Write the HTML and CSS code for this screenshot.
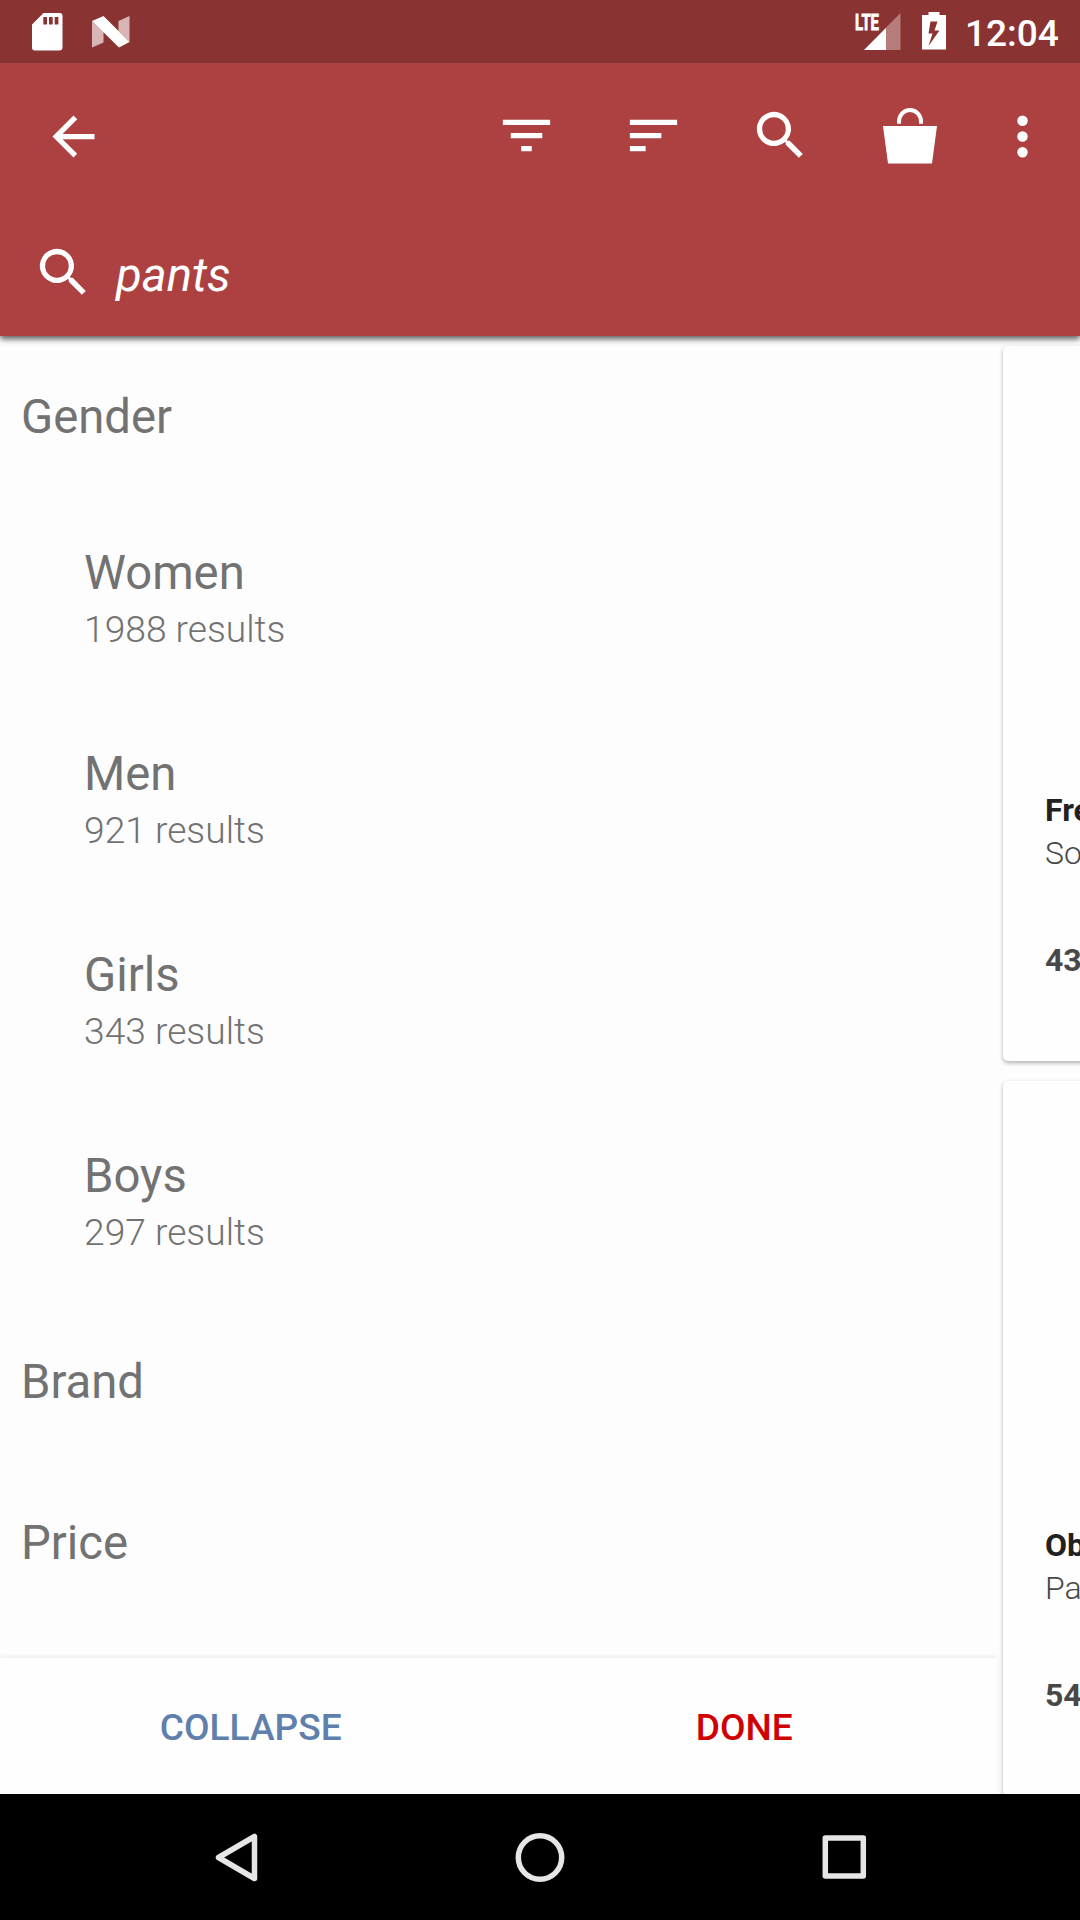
FILE: index.html
```html
<!DOCTYPE html>
<html lang="en">
<head>
<meta charset="utf-8">
<title>Search filters</title>
<link rel="stylesheet" href="styles.css">
</head>
<body>
<div class="screen">
  <header class="status-bar">
    <svg class="sd-icon" width="31" height="38" viewBox="0 0 31 38"><path fill="#fff" fill-rule="evenodd" d="M11.500 0H27.500a3 3 0 0 1 3 3V34.500a3 3 0 0 1-3 3H3a3 3 0 0 1-3-3V11.500ZM11.300 4v7.500h3.700V4ZM17 4v7.500h3.700V4ZM22.700 4v7.500h3.700V4Z"/></svg>
    <svg class="n-icon" width="38" height="32" viewBox="0 0 38 32"><path fill="#d9b5b5" d="M0 5 11.500 16V26.500L0 31.500ZM37.500 0V26L26.500 15V5Z"/><path fill="#fff" d="M0 5 11.500 0 37.500 26 27 31.500Z"/></svg>
    <svg class="signal-icon" width="46" height="38" viewBox="0 0 46 38"><text class="lte" x="0" y="16.500" textLength="24" lengthAdjust="spacingAndGlyphs">LTE</text><path fill="#b77c7c" d="M31 14.500 45.500 0V37H31Z"/><path fill="#fff" d="M9 37 31 14.800V37Z"/></svg>
    <svg class="battery-icon" width="24" height="38" viewBox="0 0 24 38"><path fill="#fff" fill-rule="evenodd" d="M6.500 0H17.500V3H24V37.500H0V3H6.500ZM8.500 9.500 6.500 21.500H10.500L6.500 34 17.500 18.500H12.500L15.500 9.500Z"/></svg>
    <time class="clock">12:04</time>
  </header>

  <div class="app-bar">
    <nav class="toolbar">
      <svg class="icon back" viewBox="0 0 24 24"><path d="M20 11H7.830l5.590-5.590L12 4l-8 8 8 8 1.410-1.410L7.830 13H20v-2z"/></svg>
      <svg class="icon" viewBox="0 0 24 24"><path d="M10 18h4v-2h-4v2zM3 6v2h18V6H3zm3 7h12v-2H6v2z"/></svg>
      <svg class="icon" viewBox="0 0 24 24"><path d="M3 18h6v-2H3v2zM3 6v2h18V6H3zm0 7h12v-2H3v2z"/></svg>
      <svg class="icon" viewBox="0 0 24 24"><path d="M15.500 14h-.790l-.280-.270A6.500 6.500 0 1 0 13.730 14.430l.270.280v.790l5 4.990L20.490 19l-4.990-5zm-6 0a4.500 4.500 0 1 1 0-9 4.500 4.500 0 0 1 0 9z"/></svg>
      <svg class="bag" width="54" height="56" viewBox="0 0 54 56"><path fill="#fff" d="M0 18H54L49 55.500H5Z"/><path fill="none" stroke="#fff" stroke-width="4" d="M16 15.800V13.500a11 11.500 0 0 1 22 0V15.800"/></svg>
      <svg class="icon more" viewBox="0 0 24 24"><path d="M12 8a2 2 0 1 0 0-4 2 2 0 0 0 0 4zm0 2a2 2 0 1 0 0 4 2 2 0 0 0 0-4zm0 6a2 2 0 1 0 0 4 2 2 0 0 0 0-4z"/></svg>
    </nav>
    <div class="query">
      <svg class="icon" viewBox="0 0 24 24"><path d="M15.500 14h-.790l-.280-.270A6.500 6.500 0 1 0 13.730 14.430l.270.280v.790l5 4.990L20.490 19l-4.990-5zm-6 0a4.500 4.500 0 1 1 0-9 4.500 4.500 0 0 1 0 9z"/></svg>
      <span class="query-text">pants</span>
    </div>
  </div>

  <main class="content">
    <aside class="filters">
      <div class="filter-list">
        <h2 class="group">Gender</h2>
        <div class="option"><span class="name">Women</span><span class="count">1988 results</span></div>
        <div class="option"><span class="name">Men</span><span class="count">921 results</span></div>
        <div class="option"><span class="name">Girls</span><span class="count">343 results</span></div>
        <div class="option"><span class="name">Boys</span><span class="count">297 results</span></div>
        <h2 class="group">Brand</h2>
        <h2 class="group">Price</h2>
      </div>
      <div class="actions">
        <button class="action collapse">COLLAPSE</button>
        <button class="action done">DONE</button>
      </div>
    </aside>
    <section class="products">
      <article class="card">
        <h3 class="brand">Fre</h3>
        <p class="title">So</p>
        <p class="price">43</p>
      </article>
      <article class="card">
        <h3 class="brand">Ob</h3>
        <p class="title">Pa</p>
        <p class="price">54</p>
      </article>
    </section>
  </main>

  <footer class="nav-bar">
    <svg width="63" height="63" viewBox="0 0 63 63"><path class="nav-shape" d="M13.500 31.500 49.500 10.500V52.500Z"/></svg>
    <svg width="63" height="63" viewBox="0 0 63 63"><circle class="nav-shape" cx="31" cy="31.500" r="21.700"/></svg>
    <svg width="63" height="63" viewBox="0 0 63 63"><rect class="nav-shape" x="12.300" y="12" width="38" height="38"/></svg>
  </footer>
</div>
</body>
</html>
```
FILE: styles.css
```css
* { box-sizing: border-box; }

body {
  margin: 0;
  background: #fdfdfd;
  font-family: Roboto, "Liberation Sans", sans-serif;
}

h2, h3, p { margin: 0; font-weight: 400; }
svg { display: block; flex: none; }

.screen {
  display: flex;
  flex-direction: column;
  width: 1080px;
  height: 1920px;
  overflow: hidden;
}

.status-bar {
  position: relative;
  z-index: 2;
  display: flex;
  align-items: flex-start;
  flex: none;
  height: 63px;
  padding: 12px 0 0 32px;
  background: #8a3333;
}
.sd-icon { margin-top: 1px; }
.n-icon { margin: 4px 0 0 29px; }
.signal-icon { margin: 1px 21px 0 auto; overflow: visible; }
.lte {
  fill: #fff;
  stroke: #fff;
  stroke-width: .800px;
  font-size: 22px;
  font-weight: 700;
}
.clock {
  width: 115px;
  margin-left: 19px;
  color: #fff;
  font-size: 37px;
  font-weight: 500;
  line-height: 43px;
}

.app-bar {
  position: relative;
  z-index: 1;
  flex: none;
  height: 273px;
  background: #ad4141;
  box-shadow: 0 3px 6px rgba(0, 0, 0, .65);
}
.icon { width: 63px; height: 63px; fill: #fff; }
.toolbar {
  display: flex;
  align-items: center;
  gap: 64px;
  height: 147px;
  padding: 0 26px 2px 42px;
}
.back { margin: 2px auto 0 0; }
.bag { margin: 0 -10px 0 7px; }
.more { margin-top: 2px; }
.query {
  display: flex;
  align-items: center;
  gap: 21px;
  height: 126px;
  padding: 0 32px;
}
.query .icon { margin-top: -2px; }
.query-text {
  color: #fff;
  font-size: 47.250px;
  font-style: italic;
  line-height: 56px;
  padding-top: 4px;
}

.content { display: flex; flex: 1; min-height: 0; }
.filters {
  display: flex;
  flex-direction: column;
  flex: none;
  width: 997px;
}
.filter-list { flex: 1; color: #727272; overflow: hidden; }
.group {
  display: flex;
  align-items: center;
  height: 161px;
  padding-left: 21px;
  font-size: 47.250px;
}
.option {
  display: flex;
  flex-direction: column;
  justify-content: center;
  gap: 7px;
  height: 201px;
  padding: 2px 0 0 84px;
}
.name { font-size: 47.250px; line-height: 55px; }
.count { font-size: 37.200px; font-weight: 300; line-height: 43px; }
.actions {
  display: flex;
  flex: none;
  height: 136px;
  padding: 0 6px 0 4px;
  background: #fefefe;
  box-shadow: 0 -2px 4px rgba(0, 0, 0, .06);
}
.action {
  flex: 1;
  padding: 3px 0 0;
  border: 0;
  background: none;
  font: 500 37.100px Roboto, "Liberation Sans", sans-serif;
}
.collapse { color: #5f7fad; }
.done { color: #d00000; }

.products {
  display: flex;
  flex-direction: column;
  gap: 20px;
  flex: 1;
  min-width: 0;
  padding: 10px 0 0 6px;
  overflow: hidden;
}
.card {
  flex: none;
  width: 500px;
  height: 715px;
  padding: 446px 42px 0;
  border-radius: 5px;
  background: #fefefe;
  box-shadow: 0 2px 4px rgba(0, 0, 0, .3);
  font-size: 32px;
  line-height: 37px;
}
.brand { color: #212121; font-size: inherit; font-weight: 700; }
.title { margin-top: 6px; color: #484848; font-weight: 300; }
.price { margin-top: 70px; color: #484848; font-weight: 700; }

.nav-bar {
  display: flex;
  align-items: center;
  justify-content: center;
  gap: 241px;
  flex: none;
  height: 126px;
  background: #000;
}
.nav-shape {
  fill: none;
  stroke: #e6e6e6;
  stroke-width: 5.500;
  stroke-linejoin: round;
}
```
